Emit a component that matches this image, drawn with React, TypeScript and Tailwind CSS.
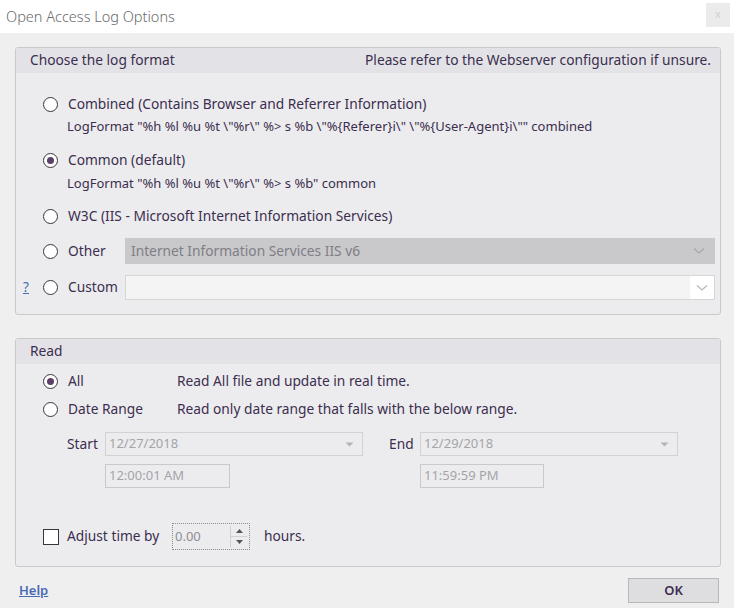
import React from "react";

const txt = "text-[#3b2e4e]";

function Radio({ checked }: { checked?: boolean }) {
  return (
    <span className="relative flex h-[15px] w-[15px] shrink-0 items-center justify-center rounded-full border-[1.5px] border-[#3a3340] bg-white">
      {checked && <span className="h-[7px] w-[7px] rounded-full bg-[#5c3f66]" />}
    </span>
  );
}

function Chevron({ className }: { className?: string }) {
  return (
    <svg width="12" height="8" viewBox="0 0 12 8" className={className}>
      <path d="M1 1.5 L6 6 L11 1.5" fill="none" stroke="currentColor" strokeWidth="1.3" />
    </svg>
  );
}

function Tri() {
  return (
    <svg width="9" height="5" viewBox="0 0 9 5">
      <path d="M0.5 0.5 L8.5 0.5 L4.5 4.5 Z" fill="#b4b4b8" />
    </svg>
  );
}

function DateBox({ value, w }: { value: string; w: string }) {
  return (
    <div className={`flex h-[24px] ${w} items-center justify-between border border-[#d2d2d6] pl-[3px] pr-[8px] text-[13px] text-[#a4a4a8]`}>
      <span>{value}</span>
      <Tri />
    </div>
  );
}

function TimeBox({ value, w }: { value: string; w: string }) {
  return (
    <div className={`flex h-[24px] ${w} items-center border border-[#c9c9cd] pl-[3px] text-[13px] text-[#a4a4a8]`}>
      {value}
    </div>
  );
}

export default function App() {
  return (
    <div
      className={`flex h-[608px] w-[734px] flex-col bg-[#efeff0] text-[13.75px] ${txt}`}
      style={{ fontFamily: '"Noto Sans", "Open Sans", sans-serif' }}
    >
      {/* Title bar */}
      <div className="flex h-[33px] shrink-0 items-center justify-between bg-white pl-[6px] pr-[4px]">
        <span className="text-[14.5px] font-light text-[#6a6a6a]">Open Access Log Options</span>
        <div className="mb-[4px] flex h-[24px] w-[24px] items-center justify-center bg-[#ebebeb] text-[11px] text-[#d0d0d0]">x</div>
      </div>

      {/* Body */}
      <div className="flex flex-1 flex-col px-[15px] pt-[14px]">
        {/* Group 1 */}
        <div className="flex w-[706px] flex-col rounded-[3px] border border-[#cacace] bg-[#ececee] pb-[14px]">
          <div className="flex h-[25px] items-center justify-between bg-[#e3e3e7] pl-[14px] pr-[9px]">
            <span>Choose the log format</span>
            <span>Please refer to the Webserver configuration if unsure.</span>
          </div>

          <div className="mt-[21px] flex h-[20px] items-center gap-[10px] pl-[27px]">
            <Radio />
            <span>Combined (Contains Browser and Referrer Information)</span>
          </div>
          <div className="mt-[3px] flex h-[20px] items-center pl-[51px] text-[13px]">
            LogFormat "%h %l %u %t \"%r\" %&gt; s %b \"%{"{"}Referer{"}"}i\" \"%{"{"}User-Agent{"}"}i\"" combined
          </div>

          <div className="mt-[13px] flex h-[20px] items-center gap-[10px] pl-[27px]">
            <Radio checked />
            <span>Common (default)</span>
          </div>
          <div className="mt-[4px] flex h-[20px] items-center pl-[51px] text-[13px]">
            LogFormat "%h %l %u %t \"%r\" %&gt; s %b" common
          </div>

          <div className="mt-[12px] flex h-[20px] items-center gap-[10px] pl-[27px]">
            <Radio />
            <span>W3C (IIS - Microsoft Internet Information Services)</span>
          </div>

          <div className="mt-[12px] flex h-[26px] items-center pl-[27px]">
            <Radio />
            <span className="ml-[10px] w-[57px]">Other</span>
            <div className="flex h-[26px] w-[590px] items-center justify-between bg-[#c9c9cc] pl-[6px] pr-[10px] text-[#7e7e84]">
              <span>Internet Information Services IIS v6</span>
              <Chevron className="text-[#a9a3ae]" />
            </div>
          </div>

          <div className="mt-[11px] flex h-[25px] items-center pl-[7px]">
            <span className="w-[20px] text-[#4a6bb3] underline">?</span>
            <Radio />
            <span className="ml-[10px] w-[57px]">Custom</span>
            <div className="flex h-[25px] w-[590px] items-stretch border border-[#d6d6d6] bg-white">
              <div className="flex-1 bg-[#f4f4f5]" />
              <div className="flex w-[24px] items-center justify-center bg-white text-[#b8b8bc]">
                <Chevron />
              </div>
            </div>
          </div>
        </div>

        {/* Group 2 */}
        <div className="mt-[23px] flex w-[706px] flex-col rounded-[3px] border border-[#cacace] bg-[#ececee] pb-[16px]">
          <div className="flex h-[25px] items-center bg-[#e3e3e7] pl-[14px]">
            <span>Read</span>
          </div>

          <div className="mt-[7px] flex h-[20px] items-center pl-[27px]">
            <Radio checked />
            <span className="ml-[10px] w-[109px]">All</span>
            <span>Read All file and update in real time.</span>
          </div>
          <div className="mt-[8px] flex h-[20px] items-center pl-[27px]">
            <Radio />
            <span className="ml-[10px] w-[109px]">Date Range</span>
            <span>Read only date range that falls with the below range.</span>
          </div>

          <div className="mt-[13px] flex h-[24px] items-center pl-[51px]">
            <span className="w-[38px]">Start</span>
            <DateBox value="12/27/2018" w="w-[258px]" />
            <span className="ml-[26px] w-[31px]">End</span>
            <DateBox value="12/29/2018" w="w-[258px]" />
          </div>
          <div className="mt-[8px] flex h-[24px] items-center pl-[89px]">
            <TimeBox value="12:00:01 AM" w="w-[125px]" />
            <div className="w-[190px]" />
            <TimeBox value="11:59:59 PM" w="w-[124px]" />
          </div>

          <div className="mt-[35px] flex h-[27px] items-center pl-[27px]">
            <span className="h-[16px] w-[16px] border-[1.5px] border-[#3a3340] bg-white" />
            <span className="ml-[8px] w-[105px]">Adjust time by</span>
            <div className="flex h-[27px] w-[78px] items-stretch border border-dotted border-[#8c8c90] text-[13px]">
              <span className="flex flex-1 items-center pl-[2px] text-[#8e8e94]">0.00</span>
              <div className="my-[2px] mr-[2px] flex w-[17px] flex-col border-l border-[#d0d0d4]">
                <div className="flex flex-1 items-center justify-center border-b border-[#d0d0d4]">
                  <svg width="7" height="4" viewBox="0 0 7 4"><path d="M0 4 L7 4 L3.5 0 Z" fill="#555" /></svg>
                </div>
                <div className="flex flex-1 items-center justify-center">
                  <svg width="7" height="4" viewBox="0 0 7 4"><path d="M0 0 L7 0 L3.5 4 Z" fill="#555" /></svg>
                </div>
              </div>
            </div>
            <span className="ml-[14px]">hours.</span>
          </div>
        </div>

        {/* Footer */}
        <div className="mt-[11px] flex items-center justify-between pl-[4px] pr-[0px]">
          <span className="text-[13px] font-semibold text-[#4a6bb3] underline">Help</span>
          <div className="flex h-[25px] w-[91px] items-center justify-center border border-[#b8b8bc] bg-[#dedee0] text-[13px] font-semibold">
            OK
          </div>
        </div>
      </div>
    </div>
  );
}
